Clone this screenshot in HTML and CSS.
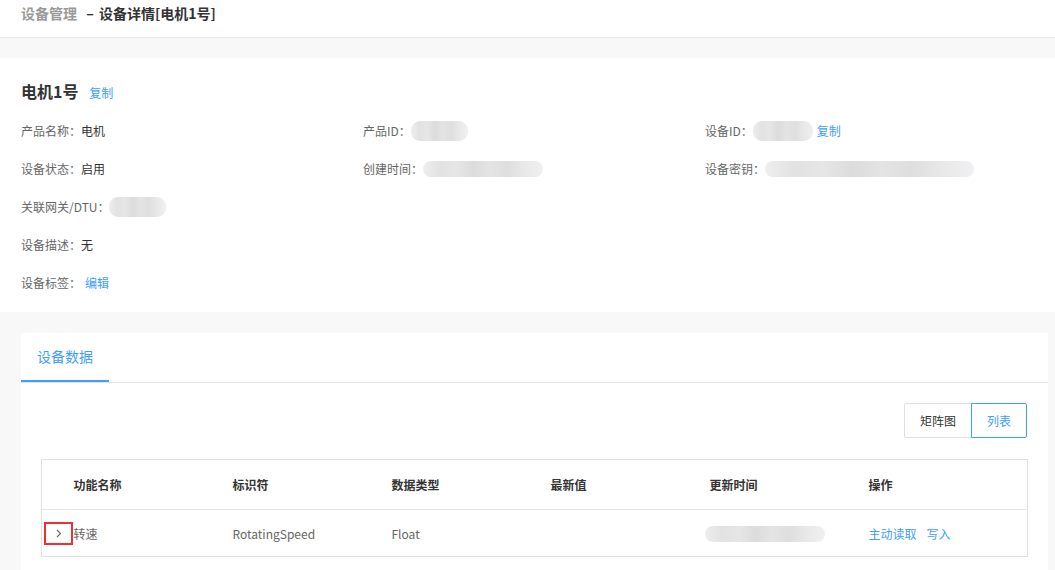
FILE: index.html
```html
<!DOCTYPE html>
<html lang="zh-CN">
<head>
    <meta charset="UTF-8">
    <title>设备详情</title>
    <link rel="stylesheet" href="styles.css">
</head>
<body>
    <div class="page-header">
        <span class="crumb-parent">设备管理</span>
        <span class="crumb-sep">–</span>
        <span class="crumb-current">设备详情[电机1号]</span>
    </div>

    <!-- 基本信息 -->
    <div class="info-card">
        <div class="device-title">
            <span class="device-name">电机1号</span>
            <a class="link">复制</a>
        </div>
        <div class="info-grid">
            <div class="info-item">产品名称：<span class="value">电机</span></div>
            <div class="info-item">产品ID：<span class="blur blur-s"></span></div>
            <div class="info-item">设备ID：<span class="blur blur-m"></span> <a class="link">复制</a></div>

            <div class="info-item">设备状态：<span class="value">启用</span></div>
            <div class="info-item">创建时间：<span class="blur blur-l"></span></div>
            <div class="info-item">设备密钥：<span class="blur blur-xl"></span></div>

            <div class="info-item full">关联网关/DTU：<span class="blur blur-s"></span></div>
            <div class="info-item full">设备描述：<span class="value">无</span></div>
            <div class="info-item full">设备标签：<a class="link">编辑</a></div>
        </div>
    </div>

    <!-- 设备数据 -->
    <div class="data-card">
        <div class="tabs">
            <div class="tab active">设备数据</div>
        </div>
        <div class="data-body">
            <div class="view-switch">
                <button class="switch-btn">矩阵图</button>
                <button class="switch-btn active">列表</button>
            </div>
            <table class="data-table">
                <thead>
                    <tr>
                        <th class="col-expand"></th>
                        <th>功能名称</th>
                        <th>标识符</th>
                        <th>数据类型</th>
                        <th>最新值</th>
                        <th>更新时间</th>
                        <th>操作</th>
                    </tr>
                </thead>
                <tbody>
                    <tr>
                        <td class="col-expand">
                            <span class="expand-box">
                                <svg width="6" height="9" viewBox="0 0 6 9"><path d="M1 1 L4.5 4.5 L1 8" fill="none" stroke="#666" stroke-width="1.1"/></svg>
                            </span>
                        </td>
                        <td>转速</td>
                        <td>RotatingSpeed</td>
                        <td>Float</td>
                        <td></td>
                        <td><span class="blur blur-l"></span></td>
                        <td><a class="link">主动读取</a><a class="link op">写入</a></td>
                    </tr>
                </tbody>
            </table>
        </div>
    </div>
</body>
</html>
```

FILE: styles.css
```css
* {
    margin: 0;
    padding: 0;
    box-sizing: border-box;
}

body {
    font-family: "Microsoft YaHei", "Noto Sans CJK SC", "Liberation Sans", sans-serif;
    font-size: 12px;
    color: #666;
    background: #f8f8f8;
    width: 1055px;
    height: 570px;
    overflow: hidden;
}

.link {
    color: #409eff;
    cursor: pointer;
}

/* 顶部标题 */
.page-header {
    height: 38px;
    background: #fff;
    border-bottom: 1px solid #e8e8e8;
    padding: 0 21px;
    font-size: 14px;
    font-weight: bold;
    line-height: 26px;
}

.crumb-parent {
    color: #999;
}

.crumb-sep {
    color: #333;
    margin: 0 2px 0 6px;
}

.crumb-current {
    color: #333;
}

/* 基本信息 */
.info-card {
    margin-top: 20px;
    background: #fff;
    padding: 21px 21px 10px;
    height: 254px;
}

.device-title {
    height: 24px;
    line-height: 24px;
    margin-bottom: 9px;
}

.device-name {
    font-size: 16px;
    font-weight: bold;
    color: #333;
    margin-right: 8px;
}

.device-title .link {
    font-size: 12px;
}

.info-grid {
    display: grid;
    grid-template-columns: 342px 342px 342px;
}

.info-item {
    height: 38px;
    line-height: 38px;
    display: flex;
    align-items: center;
    white-space: nowrap;
}

.info-item.full {
    grid-column: 1 / 4;
}

.value {
    color: #333;
}

.info-item .link {
    margin-left: 4px;
}

/* 模糊遮挡 */
.blur {
    display: inline-block;
    height: 17px;
    border-radius: 9px;
    background: linear-gradient(90deg,
        #eeeeee 0%, #e2e2e2 14%, #e6e6e6 28%, #dcdcdc 42%,
        #e4e4e4 56%, #dedede 70%, #e8e8e8 84%, #f0f0f2 100%);
    filter: blur(0.6px);
}

.blur-s {
    width: 57px;
    height: 20px;
}

.blur-m {
    width: 60px;
    height: 20px;
}

.blur-l {
    width: 120px;
    height: 16px;
}

.blur-xl {
    width: 209px;
    height: 16px;
}

/* 设备数据 */
.data-card {
    margin: 21px 7px 0 21px;
    background: #fff;
    height: 240px;
}

.tabs {
    height: 50px;
    border-bottom: 1px solid #e4e4e4;
    display: flex;
}

.tab {
    padding: 0 16px;
    line-height: 47px;
    font-size: 14px;
    color: #666;
}

.tab.active {
    color: #409eff;
    border-bottom: 2px solid #409eff;
    height: 49px;
}

.data-body {
    padding: 20px 21px 0 20px;
}

.view-switch {
    display: flex;
    justify-content: flex-end;
    margin-bottom: 21px;
}

.switch-btn {
    height: 35px;
    background: #fff;
    border: 1px solid #dcdfe6;
    font-family: inherit;
    font-size: 12px;
    color: #333;
    padding: 0 15px;
    border-radius: 2px 0 0 2px;
}

.switch-btn.active {
    border-color: #409eff;
    color: #409eff;
    border-radius: 0 2px 2px 0;
    margin-left: -1px;
}

.data-table {
    width: 986px;
    border-collapse: collapse;
    border: 1px solid #e0e0e0;
    table-layout: fixed;
}

.data-table th,
.data-table td {
    text-align: left;
    white-space: nowrap;
    width: 159px;
}

.data-table th {
    height: 50px;
    color: #333;
    font-weight: bold;
    border-bottom: 1px solid #e6e6e6;
}

.data-table td {
    height: 47px;
    color: #666;
}

.data-table .col-expand {
    width: 32px;
    padding-left: 2px;
}

.expand-box {
    display: flex;
    align-items: center;
    justify-content: center;
    width: 29px;
    height: 23px;
    border: 2px solid #f03030;
}

.data-table td .blur {
    vertical-align: middle;
    margin-left: -5px;
}

.op {
    margin-left: 10px;
}
```
